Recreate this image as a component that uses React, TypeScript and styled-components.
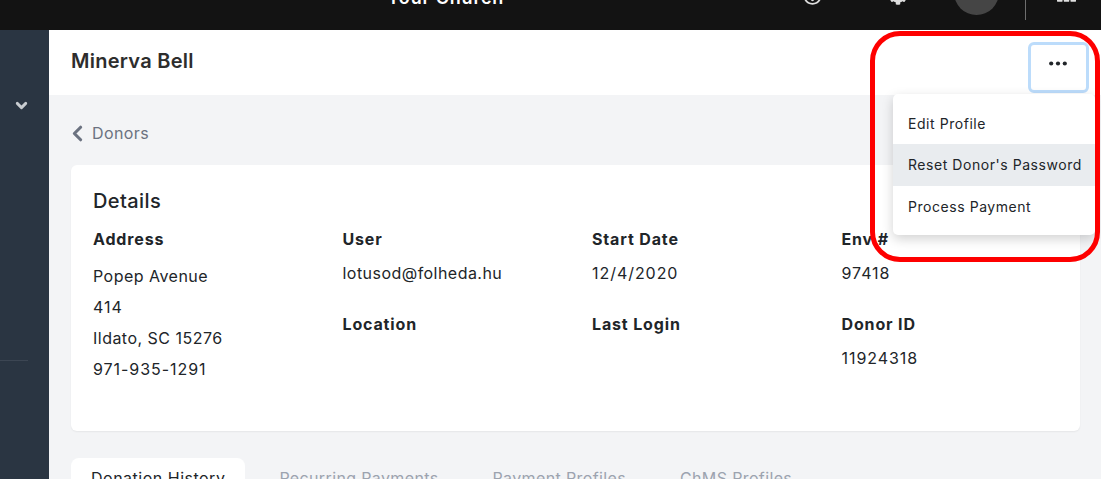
import React from "react";
import styled, { createGlobalStyle } from "styled-components";
import { FaCog, FaRegQuestionCircle, FaTh } from "react-icons/fa";
import { ChevronDown, ChevronLeft } from "lucide-react";

const addressLines = [
  { text: "Popep Avenue" },
  { text: "414", numeric: true },
  { text: "Ildato, SC 15276" },
  { text: "971-935-1291", numeric: true },
];
const tabs = ["Donation History", "Recurring Payments", "Payment Profiles", "ChMS Profiles"];
const menuItems = ["Edit Profile", "Reset Donor's Password", "Process Payment"];

export default function App() {
  return (
    <>
      <GlobalStyle />
      <Page>
        <TopBar>
          <ChurchName>Your Church</ChurchName>
          <HelpIcon />
          <GearIcon />
          <Avatar />
          <TopDivider />
          <GridIcon />
        </TopBar>
        <Body>
          <Sidebar>
            <SideChevron strokeWidth={4} />
            <SideRule />
          </Sidebar>
          <Main>
            <Header>
              <Title>Minerva Bell</Title>
              <MenuButton>
                <svg width="18" height="5" viewBox="0 0 18 5">
                  <circle cx="2.2" cy="2.5" r="2.1" fill="#212529" />
                  <circle cx="9" cy="2.5" r="2.1" fill="#212529" />
                  <circle cx="15.8" cy="2.5" r="2.1" fill="#212529" />
                </svg>
              </MenuButton>
            </Header>
            <Content>
              <BackLink>
                <BackChevron strokeWidth={3} />
                Donors
              </BackLink>
              <Card>
                <CardTitle>Details</CardTitle>
                <Columns>
                  <Column>
                    <Label>Address</Label>
                    <AddressList>
                      {addressLines.map((line) => (
                        <AddressLine key={line.text} numeric={line.numeric}>
                          {line.text}
                        </AddressLine>
                      ))}
                    </AddressList>
                  </Column>
                  <Column>
                    <Label>User</Label>
                    <Value>lotusod@folheda.hu</Value>
                    <Label>Location</Label>
                  </Column>
                  <Column>
                    <Label>Start Date</Label>
                    <Value numeric>12/4/2020</Value>
                    <Label>Last Login</Label>
                  </Column>
                  <Column>
                    <Label>Env #</Label>
                    <Value numeric>97418</Value>
                    <Label>Donor ID</Label>
                    <Value numeric>11924318</Value>
                  </Column>
                </Columns>
              </Card>
              <Tabs>
                {tabs.map((tab, i) => (
                  <Tab key={tab} active={i === 0}>
                    {tab}
                  </Tab>
                ))}
              </Tabs>
            </Content>
          </Main>
        </Body>
        <Menu>
          {menuItems.map((item, i) => (
            <MenuItem key={item} hovered={i === 1}>
              {item}
            </MenuItem>
          ))}
        </Menu>
        <Highlight />
      </Page>
    </>
  );
}

const GlobalStyle = createGlobalStyle`
  html, body {
    margin: 0;
    height: 479px;
    overflow: hidden;
    font-family: Inter, "Liberation Sans", sans-serif;
    letter-spacing: 0.42px;
    color: #212529;
  }
`;

const Page = styled.div`
  position: relative;
  width: 1101px;
  height: 479px;
  overflow: hidden;
  background: #f3f4f6;
`;

const TopBar = styled.div`
  display: flex;
  align-items: flex-start;
  height: 30px;
  overflow: hidden;
  background: #131313;
  color: #fff;
  & > * {
    flex: none;
  }
`;

const ChurchName = styled.div`
  width: 416px;
  margin: -13px 0 0 387px;
  font-size: 18px;
  font-weight: 600;
  line-height: 22px;
  letter-spacing: 0.8px;
  white-space: nowrap;
`;

const HelpIcon = styled(FaRegQuestionCircle)`
  width: 19px;
  height: 19px;
  margin-top: -14px;
  color: #ddd;
`;

const GearIcon = styled(FaCog)`
  width: 18px;
  height: 18px;
  margin: -13px 0 0 67px;
  color: #ddd;
`;

const Avatar = styled.div`
  width: 45px;
  height: 45px;
  margin: -30px 0 0 47px;
  border-radius: 50%;
  background: #454545;
`;

const TopDivider = styled.div`
  width: 1px;
  height: 20px;
  margin-left: 26px;
  background: #6e6e6e;
`;

const GridIcon = styled(FaTh)`
  width: 19px;
  height: 19px;
  margin: -16px 0 0 31px;
  color: #e0e0e0;
`;

const Body = styled.div`
  display: flex;
  height: 449px;
`;

const Sidebar = styled.div`
  flex: 0 0 49px;
  box-sizing: border-box;
  padding-top: 67px;
  background: #2a3542;
`;

const SideChevron = styled(ChevronDown)`
  display: block;
  width: 17px;
  height: 17px;
  margin-left: 13px;
  color: #c8ccd0;
`;

const SideRule = styled.div`
  width: 28px;
  height: 1px;
  margin-top: 246px;
  background: #3c4653;
`;

const Main = styled.div`
  flex: 1;
  min-width: 0;
`;

const Header = styled.div`
  display: flex;
  justify-content: space-between;
  align-items: flex-start;
  box-sizing: border-box;
  height: 65px;
  padding: 12px 12px 0 22px;
  background: #fff;
`;

const Title = styled.h1`
  margin: 5px 0 0;
  font-size: 20px;
  font-weight: 600;
  line-height: 28px;
  letter-spacing: 0.27px;
  color: #2d2d2d;
`;

const MenuButton = styled.button`
  display: flex;
  align-items: center;
  justify-content: center;
  box-sizing: border-box;
  width: 61px;
  height: 51px;
  padding: 0 2px 8px 0;
  border: 3px solid #bcdcfb;
  border-radius: 6px;
  background: #fff;
`;

const Content = styled.div`
  padding: 26px 21px 0 22px;
`;

const BackLink = styled.div`
  display: flex;
  align-items: center;
  gap: 2px;
  height: 24px;
  margin-left: -6px;
  font-size: 16px;
  color: #6b7280;
`;

const BackChevron = styled(ChevronLeft)`
  width: 25px;
  height: 25px;
`;

const Card = styled.div`
  box-sizing: border-box;
  height: 266px;
  margin-top: 20px;
  padding: 21px 22px 0;
  background: #fff;
  border-radius: 6px;
  box-shadow: 0 1px 2px rgba(0, 0, 0, 0.06);
`;

const CardTitle = styled.h2`
  margin: 0;
  font-size: 20px;
  font-weight: 500;
  line-height: 30px;
`;

const Columns = styled.div`
  display: grid;
  grid-template-columns: repeat(4, 249.5px);
  margin-top: 11px;
`;

const Column = styled.div`
  display: flex;
  flex-direction: column;
`;

const Label = styled.div`
  font-size: 16px;
  font-weight: 700;
  line-height: 24px;
  letter-spacing: 0.85px;
`;

const Value = styled.div<{ numeric?: boolean }>`
  margin: 10px 0 27px;
  font-size: 16px;
  line-height: 24px;
  letter-spacing: ${(props) => (props.numeric ? "0.95px" : "0.46px")};
`;

const AddressList = styled.div`
  margin-top: 10px;
`;

const AddressLine = styled.div<{ numeric?: boolean }>`
  font-size: 16px;
  line-height: 31px;
  letter-spacing: ${(props) => (props.numeric ? "0.95px" : "0.48px")};
`;

const Tabs = styled.div`
  display: flex;
  margin-top: 27px;
`;

const Tab = styled.div<{ active: boolean }>`
  box-sizing: border-box;
  height: 40px;
  padding: 8px 20px 0;
  margin-right: 14px;
  font-size: 16px;
  line-height: 24px;
  letter-spacing: ${(props) => (props.active ? "0.5px" : "0.37px")};
  white-space: nowrap;
  border-radius: 8px 8px 0 0;
  background: ${(props) => (props.active ? "#fff" : "transparent")};
  color: ${(props) => (props.active ? "#212529" : "#9ca3af")};
`;

const Menu = styled.div`
  position: absolute;
  left: 893px;
  top: 94px;
  box-sizing: border-box;
  width: 202px;
  height: 141px;
  padding: 8px 0;
  background: #fff;
  border-radius: 5px;
  box-shadow: 0 4px 12px rgba(0, 0, 0, 0.18);
`;

const MenuItem = styled.div<{ hovered: boolean }>`
  box-sizing: border-box;
  height: 42px;
  padding: 0 15px;
  font-size: 14px;
  line-height: 42px;
  letter-spacing: 0.55px;
  white-space: nowrap;
  color: #212529;
  background: ${(props) => (props.hovered ? "#e9ecef" : "transparent")};
  &:first-child {
    padding-top: 1px;
  }
`;

const Highlight = styled.div`
  position: absolute;
  left: 870px;
  top: 31px;
  box-sizing: border-box;
  width: 230px;
  height: 231px;
  border: 5px solid #fe0000;
  border-radius: 30px;
  pointer-events: none;
`;
